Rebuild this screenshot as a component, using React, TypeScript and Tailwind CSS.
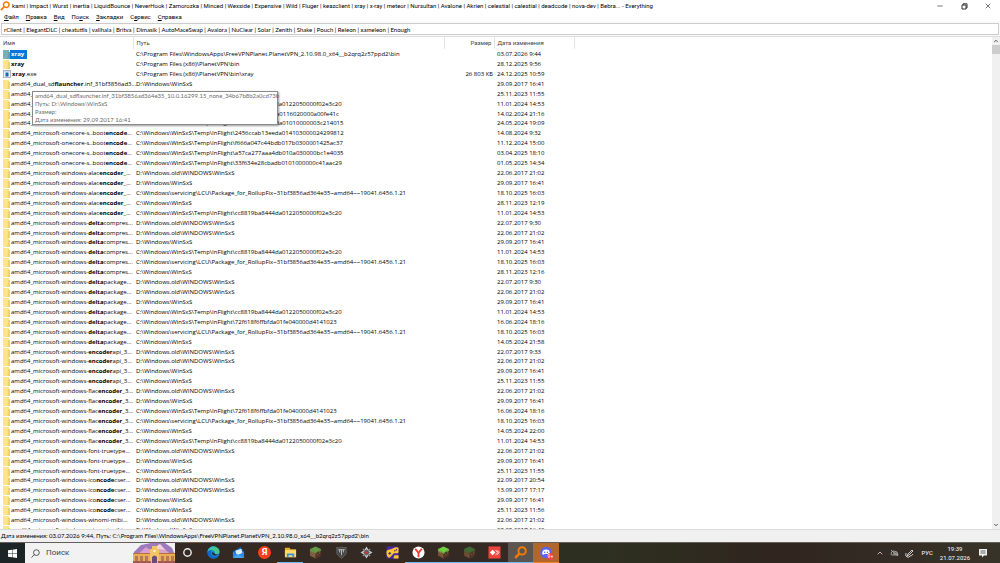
import { useState } from 'react';
import type { ReactNode } from 'react';
import { ChevronDown, ChevronUp, Minus, X } from 'lucide-react';

interface FileRow {
  name: string;
  path: string;
  date: string;
  size?: string;
}

const FLIGHT = 'C:\\Windows\\WinSxS\\Temp\\InFlight\\';
const SERVICING = 'C:\\Windows\\servicing\\LCU\\Package_for_RollupFix~31bf3856ad364e35~amd64~~19041.6456.1.21';
const OLD = 'D:\\Windows.old\\WINDOWS\\WinSxS';
const D_SXS = 'D:\\Windows\\WinSxS';
const C_SXS = 'C:\\Windows\\WinSxS';

const ONECORE = 'amd64_microsoft-onecore-s..boot*encode*...';
const ALAC = 'amd64_microsoft-windows-alac*encoder*_...';
const DELTA_C = 'amd64_microsoft-windows-*delta*compres...';
const DELTA_P = 'amd64_microsoft-windows-*delta*package...';
const ENCODER = 'amd64_microsoft-windows-*encoder*api_3...';
const FLAC = 'amd64_microsoft-windows-flac*encoder*_3...';
const FONT = 'amd64_microsoft-windows-font-truetype...';
const ICON = 'amd64_microsoft-windows-ico*ncode*cser...';
const WINOMI = 'amd64_microsoft-windows-winomi-mibi...';

// parts of a name between asterisks are the matched text
const rows: FileRow[] = [
  { name: '*xray*', path: 'C:\\Program Files\\WindowsApps\\FreeVPNPlanet.PlanetVPN_2.10.98.0_x64__b2qrq2z57ppd2\\bin', date: '03.07.2026 9:44' },
  { name: '*xray*', path: 'C:\\Program Files (x86)\\PlanetVPN\\bin', date: '28.12.2025 9:56' },
  { name: '*xray*.exe', path: 'C:\\Program Files (x86)\\PlanetVPN\\bin\\xray', date: '24.12.2025 10:59', size: '26 803 КБ' },
  { name: 'amd64_dual_sd*flauncher*.inf_31bf3856ad3...', path: D_SXS, date: '29.09.2017 16:41' },
  { name: 'amd64_dual_sd*flauncher*.inf_31bf3856ad3...', path: C_SXS, date: '25.11.2023 11:55' },
  { name: ONECORE, path: FLIGHT + 'cc8819ba8444da0122050000f02e3c20', date: '11.01.2024 14:53' },
  { name: ONECORE, path: FLIGHT + 'b7240f5cc85fda0116020000a00fe41c', date: '14.02.2024 21:16' },
  { name: ONECORE, path: FLIGHT + '5f63abdba7adda01010000003c214015', date: '24.05.2024 19:09' },
  { name: ONECORE, path: FLIGHT + '2456ccab13eeda014103000024299812', date: '14.08.2024 9:32' },
  { name: ONECORE, path: FLIGHT + 'f666a047c44bdb017b0300001425ac37', date: '11.12.2024 15:00' },
  { name: ONECORE, path: FLIGHT + 'a57ca277aaa4db010a030000bc1e4035', date: '03.04.2025 18:10' },
  { name: ONECORE, path: FLIGHT + '33f634e28cbadb0101000000c41aac29', date: '01.05.2025 14:34' },
  { name: ALAC, path: OLD, date: '22.06.2017 21:02' },
  { name: ALAC, path: D_SXS, date: '29.09.2017 16:41' },
  { name: ALAC, path: SERVICING, date: '18.10.2025 16:03' },
  { name: ALAC, path: C_SXS, date: '28.11.2023 12:19' },
  { name: ALAC, path: FLIGHT + 'cc8819ba8444da0122050000f02e3c20', date: '11.01.2024 14:53' },
  { name: DELTA_C, path: OLD, date: '22.07.2017 9:30' },
  { name: DELTA_C, path: OLD, date: '22.06.2017 21:02' },
  { name: DELTA_C, path: D_SXS, date: '29.09.2017 16:41' },
  { name: DELTA_C, path: FLIGHT + 'cc8819ba8444da0122050000f02e3c20', date: '11.01.2024 14:53' },
  { name: DELTA_C, path: SERVICING, date: '18.10.2025 16:03' },
  { name: DELTA_C, path: C_SXS, date: '28.11.2023 12:16' },
  { name: DELTA_P, path: OLD, date: '22.07.2017 9:30' },
  { name: DELTA_P, path: OLD, date: '22.06.2017 21:02' },
  { name: DELTA_P, path: D_SXS, date: '29.09.2017 16:41' },
  { name: DELTA_P, path: FLIGHT + 'cc8819ba8444da0122050000f02e3c20', date: '11.01.2024 14:53' },
  { name: DELTA_P, path: FLIGHT + '72f618f6ffbfda01fe040000d4141023', date: '16.06.2024 18:16' },
  { name: DELTA_P, path: SERVICING, date: '18.10.2025 16:03' },
  { name: DELTA_P, path: C_SXS, date: '14.05.2024 21:58' },
  { name: ENCODER, path: OLD, date: '22.07.2017 9:33' },
  { name: ENCODER, path: OLD, date: '22.06.2017 21:02' },
  { name: ENCODER, path: D_SXS, date: '29.09.2017 16:41' },
  { name: ENCODER, path: C_SXS, date: '25.11.2023 11:55' },
  { name: FLAC, path: OLD, date: '22.06.2017 21:02' },
  { name: FLAC, path: D_SXS, date: '29.09.2017 16:41' },
  { name: FLAC, path: FLIGHT + '72f618f6ffbfda01fe040000d4141023', date: '16.06.2024 18:16' },
  { name: FLAC, path: SERVICING, date: '18.10.2025 16:03' },
  { name: FLAC, path: C_SXS, date: '14.05.2024 22:00' },
  { name: FLAC, path: FLIGHT + 'cc8819ba8444da0122050000f02e3c20', date: '11.01.2024 14:53' },
  { name: FONT, path: OLD, date: '22.06.2017 21:02' },
  { name: FONT, path: D_SXS, date: '29.09.2017 16:41' },
  { name: FONT, path: C_SXS, date: '25.11.2023 11:55' },
  { name: ICON, path: OLD, date: '22.09.2017 20:54' },
  { name: ICON, path: OLD, date: '13.09.2017 17:17' },
  { name: ICON, path: D_SXS, date: '29.09.2017 16:41' },
  { name: ICON, path: C_SXS, date: '25.11.2023 11:56' },
  { name: WINOMI, path: OLD, date: '22.06.2017 21:02' },
  { name: WINOMI, path: D_SXS, date: '29.09.2017 16:42' },
];

const menu = ['Файл', 'Правка', 'Вид', 'Поиск', 'Закладки', 'Сервис', 'Справка'];
// index of the underlined access key in each menu title
const accessKeys = [0, 0, 0, 2, 0, 1, 0];

const FolderIcon = ({ selected }: { selected: boolean }) => (
  <svg viewBox="0 0 7 9" className="w-[7px] h-[9px] shrink-0">
    <path d="M0 0h6v2h1v7H0z" fill={selected ? '#7aafb5' : '#ffe48a'} />
    <path d="M5 2h2v7H4.500z" fill={selected ? '#68a0aa' : '#f5d267'} />
  </svg>
);

const ExeIcon = () => (
  <svg viewBox="0 0 8 8" className="w-2 h-2 shrink-0">
    <rect x=".5" y=".5" width="7" height="7" fill="#eef3f7" stroke="#9aa8b4" strokeWidth=".8" />
    <rect x="1" y="1" width="6" height="1" fill="#c9d6e2" />
    <rect x="2.500" y="2.500" width="3" height="4" fill="#1769b5" />
  </svg>
);

const MagnifierIcon = ({ className }: { className: string }) => (
  <svg viewBox="0 0 16 16" className={className} fill="none" stroke="#f57c00">
    <circle cx="10" cy="6" r="4.500" strokeWidth="2.400" />
    <path d="M6.500 9.500L1.500 14.500" strokeWidth="3" />
  </svg>
);

const FileName = ({ name }: { name: string }) => (
  <>
    {name.split('*').map((part, i) => (i % 2 ? <b key={i}>{part}</b> : <span key={i}>{part}</span>))}
  </>
);

const GrassBlock = ({ top, side }: { top: string; side: string }) => (
  <svg viewBox="0 0 14 14" className="w-[13px] h-[13px]">
    <path d="M7 1l6 2.500v7L7 13.500 1 10.500v-7z" fill={side} />
    <path d="M7 7l6-3v6.500L7 13.500z" fill="#4b3323" />
    <path d="M7 .5l6.200 3L7 7 .8 3.500z" fill={top} />
    <path d="M1 3.500L7 7l6-3.500V5l-2 1.500-1-.5-3 2.500-2-1.500-2 0-2-2z" fill={top} opacity=".75" />
    <path d="M3 8h1v1H3zM5 10h1v1H5zM9 9h1v1H9zM11 7h1v1h-1z" fill="#a47b58" />
  </svg>
);

interface TaskItem {
  label: string;
  icon: ReactNode;
  state: 'idle' | 'open' | 'active' | 'alert';
}

const tasks: TaskItem[] = [
  {
    label: 'Cortana',
    state: 'idle',
    icon: (
      <svg viewBox="0 0 14 14" className="w-[13px] h-[13px]">
        <circle cx="7" cy="7" r="4" fill="none" stroke="#eee" strokeWidth="1.500" />
      </svg>
    ),
  },
  {
    label: 'Edge',
    state: 'idle',
    icon: (
      <svg viewBox="0 0 14 14" className="w-[13px] h-[13px]">
        <circle cx="7" cy="7" r="6.500" fill="#1683d8" />
        <path d="M.6 6.500C1 2.500 4 .5 7 .5c4 0 6.500 3 6.500 5.500 0 2-1.500 3-3.200 3C8.500 9 8 8.400 8.300 7.600 8.800 6 7.500 4.500 5.500 4.500 3 4.500 1.200 5.500.6 6.500z" fill="#43c88c" />
        <path d="M.6 6.500C1 2.500 4 .5 7 .5c1 0 2 .2 3 .6C6 1.500 2 3 .6 6.500z" fill="#35b5e5" />
        <path d="M.5 7C1 5 3 4 5 4.200 3.500 5.500 3.500 9.500 6.500 11c2 1 4.500.6 6-.6C11.500 12.500 9.500 13.500 7 13.500 3 13.500.5 10.500.5 7z" fill="#1268c0" />
        <path d="M5.500 6.500C5 8.500 6.500 10.500 9 10.300c1.200 0 2.500-.6 3.500-1.300-1.500.5-4 .3-4.300-.9z" fill="#2b2420" />
      </svg>
    ),
  },
  {
    label: 'Почта',
    state: 'idle',
    icon: (
      <svg viewBox="0 0 14 14" className="w-[13px] h-[13px]">
        <path d="M1 6l8-5 4 5v7H1z" fill="#1463ba" />
        <path d="M3.500 5l6.500-2 1.500 5L5 10z" fill="#dceefa" />
        <path d="M1 6l6 4 6-4v7H1z" fill="#2b8be5" />
        <path d="M1 13l5-4 7 4z" fill="#4ba6f0" />
      </svg>
    ),
  },
  {
    label: 'Яндекс',
    state: 'idle',
    icon: (
      <span className="flex size-[13px] items-center justify-center rounded-full bg-[#fc3f1d] text-[9px] leading-none font-bold text-white">
        Я
      </span>
    ),
  },
  {
    label: 'Проводник',
    state: 'open',
    icon: (
      <svg viewBox="0 0 14 14" className="w-[13px] h-[13px]">
        <path d="M1 2h5l1 1.500h6V12H1z" fill="#e9ad2b" />
        <path d="M1 4.500h12V12H1z" fill="#ffda6b" />
        <path d="M3 8h8v4H9v-2H5v2H3z" fill="#3c91d9" />
      </svg>
    ),
  },
  { label: 'Minecraft', state: 'idle', icon: <GrassBlock top="#619b43" side="#80583b" /> },
  {
    label: 'World of Tanks',
    state: 'idle',
    icon: (
      <svg viewBox="0 0 14 14" className="w-[13px] h-[13px]">
        <path d="M2 1.500L4.500 2 7 1l2.500 1L12 1.500v7L7 13.500 2 8.500z" fill="#454746" stroke="#777978" strokeWidth=".7" />
        <path d="M3.500 4h7M7 4v6M5 4v3M9 4v3" stroke="#c0c1bf" strokeWidth="1" />
      </svg>
    ),
  },
  {
    label: 'Лаунчер',
    state: 'idle',
    icon: (
      <svg viewBox="0 0 14 14" className="w-[13px] h-[13px]">
        <path d="M7 .5l2.500 4 4 2.500-4 2.500-2.500 4-2.500-4-4-2.500 4-2.500z" fill="#c3c8ca" />
        <path d="M3 3l3 3M11 3L8 6M3 11l3-3M11 11L8 8" stroke="#8c9194" strokeWidth="1.200" />
        <path d="M7 3.500L10.500 7 7 10.500 3.500 7z" fill="#55595c" />
        <path d="M7 5l2 2-2 2-2-2z" fill="#d83535" />
      </svg>
    ),
  },
  {
    label: 'Игры',
    state: 'idle',
    icon: (
      <svg viewBox="0 0 14 14" className="w-[13px] h-[13px]">
        <rect x=".5" y=".5" width="13" height="13" rx="1" fill="#4a28a8" />
        <path d="M.5 6c1-2.500 3-2 5-2.500S10 0 13.500 2v5c-1 1.500-2.500.5-4 .5S6 10.500 4 12.500C1 13 .5 9 .5 6z" fill="#ffc52f" />
        <path d="M2.500 8h3M4 6.500v3" stroke="#3b2686" strokeWidth="1" />
        <circle cx="9.500" cy="5" r=".8" fill="#3b2686" />
        <circle cx="11.300" cy="4" r=".8" fill="#3b2686" />
        <path d="M9 10h4.500v3.500H8z" fill="#ffc52f" />
      </svg>
    ),
  },
  {
    label: 'Яндекс Браузер',
    state: 'open',
    icon: (
      <svg viewBox="0 0 14 14" className="w-[13px] h-[13px]">
        <circle cx="7" cy="7" r="6.500" fill="#fff" />
        <path d="M3.500 3L7 7.500V12M10.500 3L7 7.500" fill="none" stroke="#f23a31" strokeWidth="2" />
      </svg>
    ),
  },
  { label: 'Minecraft Launcher', state: 'open', icon: <GrassBlock top="#6fd044" side="#754e34" /> },
  { label: 'Minecraft Server', state: 'open', icon: <GrassBlock top="#3f6a32" side="#684631" /> },
  {
    label: 'AnyDesk',
    state: 'open',
    icon: (
      <svg viewBox="0 0 14 14" className="w-[13px] h-[13px]">
        <rect x=".5" y=".5" width="13" height="13" fill="#ef443b" />
        <path d="M5 4l3 3-3 3-3-3z" fill="#fff" />
        <path d="M8 4.500L10.500 7 8 9.500M9.500 4.500L12 7 9.500 9.500" fill="none" stroke="#fff" strokeWidth=".9" />
      </svg>
    ),
  },
  { label: 'Everything', state: 'active', icon: <MagnifierIcon className="w-[13px] h-[13px]" /> },
  {
    label: 'Discord',
    state: 'alert',
    icon: (
      <svg viewBox="0 0 14 14" className="w-[13px] h-[13px]">
        <circle cx="6.500" cy="7" r="6.300" fill="#5865f2" />
        <path d="M3.500 4.500C5 3.700 8 3.700 9.500 4.500c1 1.500 1.300 3 1 4.500L9 9.500 8.300 8.700H4.700L4 9.500 2.500 9c-.3-1.500 0-3 1-4.500z" fill="#fff" />
        <circle cx="5" cy="6.800" r=".8" fill="#5865f2" />
        <circle cx="8" cy="6.800" r=".8" fill="#5865f2" />
      </svg>
    ),
  },
];

const taskStyles = {
  idle: 'border-transparent',
  open: 'border-[#76b9ed]',
  active: 'border-[#76b9ed] bg-[#5b5450]',
  alert: 'border-[#f7801f] bg-[#b3662a]',
};

const TitleBar = () => (
  <header className="flex h-3 shrink-0 items-center justify-between bg-white">
    <div className="flex min-w-0 items-center gap-[2px]">
      <MagnifierIcon className="w-[10px] h-[10px]" />
      <h1 className="whitespace-nowrap">
        kami | Impact | Wurst | inertia | LiquidBounce | NeverHook | Zamorozka | Minced | Wexside | Expensive | Wild |
        Fluger | keazclient | xray | x-ray | meteor | Nursultan | Avalone | Akrien | celestial | calestial | deadcode |
        nova-dev | Bebra... - Everything
      </h1>
    </div>
    <div className="flex items-center text-[#333]">
      <button aria-label="Свернуть" className="flex h-3 w-6 items-center justify-center">
        <Minus className="size-2" />
      </button>
      <button aria-label="Развернуть" className="flex h-3 w-6 items-center justify-center">
        <svg viewBox="0 0 7 7" className="size-[7px]" fill="none" stroke="currentColor">
          <path d="M1 2h4v4H1zM2 2V.8h4V5H5" />
        </svg>
      </button>
      <button aria-label="Закрыть" className="flex h-3 w-6 items-center justify-center">
        <X className="size-2" />
      </button>
    </div>
  </header>
);

const Tooltip = () => (
  <div
    role="tooltip"
    className="absolute top-[54px] left-8 z-10 w-[246px] border border-[#8a8a8a] bg-white px-[2px] font-['Lato',sans-serif] leading-[8px] whitespace-nowrap text-[#6b6b6b] shadow-[1px_1px_2px_#0006]"
  >
    <p>amd64_dual_sdflauncher.inf_31bf3856ad364e35_10.0.16299.15_none_34b67b8b2a0cd73b</p>
    <p>Путь: D:\Windows\WinSxS</p>
    <p>Размер:</p>
    <p>Дата изменения: 29.09.2017 16:41</p>
  </div>
);

const FileTable = ({ selected, onSelect }: { selected: number; onSelect: (i: number) => void }) => (
  <table className="w-full table-fixed border-collapse text-left whitespace-nowrap">
    <colgroup>
      <col className="w-[133px]" />
      <col className="w-[311px]" />
      <col className="w-[50px]" />
      <col className="w-[80px]" />
      <col />
    </colgroup>
    <thead>
      <tr className="leading-[12px] text-[#444]">
        <th className="border-r border-[#e5e5e5] p-0 pl-[3px] font-normal">Имя</th>
        <th className="border-r border-[#e5e5e5] p-0 pl-[3px] font-normal">Путь</th>
        <th className="border-r border-[#e5e5e5] p-0 pr-[2px] text-right font-normal">Размер</th>
        <th className="border-r border-[#e5e5e5] p-0 pl-[3px] font-normal">Дата изменения</th>
        <th className="p-0" aria-hidden="true" />
      </tr>
    </thead>
    <tbody className="font-['Open_Sans',sans-serif]">
      {rows.map((row, i) => (
        <tr key={i} onClick={() => onSelect(i)} className="h-[10px] leading-[9px] nth-[12n+8]:h-[9px]">
          <td className="p-0 pl-[3px]">
            <div className="flex items-center">
              {row.size ? <ExeIcon /> : <FolderIcon selected={i === selected} />}
              <span className={i === selected ? 'bg-[#0078d7] pr-[3px] pl-px text-white' : 'pl-px'}>
                <FileName name={row.name} />
              </span>
            </div>
          </td>
          <td className="overflow-hidden p-0 pl-[3px]">{row.path}</td>
          <td className="p-0 pr-px text-right">{row.size}</td>
          <td className="p-0 pl-[3px]">{row.date}</td>
          <td className="p-0" />
        </tr>
      ))}
    </tbody>
  </table>
);

const ScrollBar = () => (
  <div className="flex w-2 shrink-0 flex-col bg-[#f0f0f0] text-[#555]">
    <button aria-label="Вверх" className="flex h-2 items-center justify-center">
      <ChevronUp className="size-[6px]" strokeWidth={4} />
    </button>
    <div className="h-[9px] bg-[#cdcdcd]" />
    <div className="flex-1" />
    <button aria-label="Вниз" className="flex h-2 items-center justify-center">
      <ChevronDown className="size-[6px]" strokeWidth={4} />
    </button>
  </div>
);

const SearchArt = () => (
  <svg viewBox="0 0 42 20" className="h-5 w-[42px] shrink-0">
    <path d="M1 20V9L8 2 18 0h14l7 5 3 7v8z" fill="#9d79bd" />
    <path d="M4 12L13 4l6 4 8-7 12 12z" fill="#d9a1c7" />
    <path d="M17 7L27 1l5 6-6-1-4 3z" fill="#f1d0e2" />
    <path d="M0 10h42v10H0z" fill="#e9ae57" />
    <path d="M17 6h9v14h-9zM19 3h5v3h-5z" fill="#f1c469" />
    <path d="M0 10h17v1H0zM26 10h16v1H26z" fill="#b9703f" />
    <path d="M2 13h3v5H2zM7 13h3v5H7zM12 13h3v5h-3zM28 13h3v5h-3zM33 13h3v5h-3zM38 13h3v5h-3z" fill="#b57a58" />
    <path d="M19 20v-6q2.500-3 5 0v6z" fill="#6d4b76" />
    <circle cx="21.500" cy="8" r="1.200" fill="#fff3c9" />
    <path d="M0 18h18v2H0zM25 18h17v2H25z" fill="#a35a52" />
  </svg>
);

const TaskBar = () => (
  <footer className="flex h-[21px] shrink-0 items-stretch justify-between border-t border-[#665f59] bg-linear-to-r from-[#2d3020] from-60% via-[#30251f] via-78% to-[#383329] text-white">
    <div className="flex min-w-0">
      <button aria-label="Пуск" className="flex w-[25px] items-center justify-center bg-[#1d2426]">
        <svg viewBox="0 0 10 10" className="size-[9px]" fill="#fff">
          <path d="M0 1.400L4.500.8v3.900H0zM5 .7L10 0v4.700H5zM0 5.200h4.500v3.900L0 8.500zM5 5.200h5V10l-5-.7z" />
        </svg>
      </button>
      <label className="flex w-[150px] items-center bg-[#f2f2f2] pl-[6px]">
        <svg viewBox="0 0 10 10" className="size-[9px] shrink-0" fill="none" stroke="#333" strokeWidth=".9">
          <circle cx="6" cy="4" r="3.200" />
          <path d="M3.700 6.300L.5 9.500" />
        </svg>
        <input
          aria-label="Поиск"
          placeholder="Поиск"
          className="ml-[6px] min-w-0 flex-1 bg-transparent text-[8px] leading-[12px] outline-none placeholder:text-[#444]"
        />
        <SearchArt />
      </label>
      <nav className="flex w-[384px] bg-[#342923]">
        {tasks.map((task) => (
          <button
            key={task.label}
            aria-label={task.label}
            className={`relative flex flex-1 items-center justify-center border-b ${taskStyles[task.state]}`}
          >
            {task.icon}
            {task.state === 'alert' && (
              <span className="absolute right-[5px] bottom-[2px] flex size-[7px] items-center justify-center rounded-full bg-[#ed4245] text-[5px] leading-none">
                9+
              </span>
            )}
          </button>
        ))}
      </nav>
    </div>
    <div className="flex shrink-0 items-center gap-[6px] pr-3">
      <ChevronUp className="size-2" />
      <svg viewBox="0 0 9 8" className="h-2 w-[9px]" fill="none" stroke="#aaa" strokeWidth=".9">
        <path d="M1 1l7 6M1 5q0-3 3-3 4 0 4 4H2q-1 0-1-1zM3 4h4M3 5h5" />
      </svg>
      <svg viewBox="0 0 9 9" className="size-[9px]" fill="none" stroke="#ddd" strokeWidth=".9">
        <path d="M3 5l4-4 1 1-4 4-2 1zM1 4q-1 3 1 4t3-1M5 7q2 0 3-2" />
      </svg>
      <span className="px-px text-[6px]">РУС</span>
      <time className="text-center text-[6px] leading-[9px]">
        19:39
        <br />
        21.07.2026
      </time>
      <svg viewBox="0 0 10 10" className="ml-[2px] size-[10px]">
        <path d="M1 1h8v6.500H6L4 9.500v-2H1z" fill="#eee" />
        <path d="M2.500 3h5M2.500 5h5" stroke="#444" strokeWidth=".8" />
      </svg>
    </div>
  </footer>
);

const App = () => {
  const [query, setQuery] = useState(
    'rClient | ElegantDLC | cheatutils | vallhala | Britva | Dimasik | AutoMaceSwap | Avalora | NuClear | Solar | Zenith | Shake | Pouch | Releon | xameleon | Enough'
  );
  const [selected, setSelected] = useState(0);

  return (
    <div className="flex h-screen flex-col overflow-hidden bg-white font-['Roboto','Noto_Sans',sans-serif] text-[6px] leading-[10px] text-black">
      <TitleBar />
      <nav className="flex h-[9px] shrink-0 items-center gap-[7px] px-1">
        {menu.map((item, i) => (
          <button key={item}>
            {item.slice(0, accessKeys[i])}
            <u>{item[accessKeys[i]]}</u>
            {item.slice(accessKeys[i] + 1)}
          </button>
        ))}
      </nav>
      <div className="shrink-0 border-b border-[#dcdcdc] bg-[#fafafa] px-px pt-[2px] pb-px">
        <input
          aria-label="Строка поиска"
          value={query}
          onChange={(e) => setQuery(e.target.value)}
          className="block h-3 w-full border border-[#cccccc] bg-white px-[2px] font-['Lato',sans-serif] outline-none"
        />
      </div>
      <main className="relative flex min-h-0 flex-1">
        <div className="min-w-0 flex-1 overflow-hidden">
          <FileTable selected={selected} onSelect={setSelected} />
        </div>
        <ScrollBar />
        <Tooltip />
      </main>
      <div className="shrink-0 border-t border-[#dcdcdc] bg-[#f0f0f0] px-px font-['Lato',sans-serif] leading-[12px] whitespace-nowrap">
        Дата изменения: 03.07.2026 9:44, Путь: C:\Program Files\WindowsApps\FreeVPNPlanet.PlanetVPN_2.10.98.0_x64__b2qrq2z57ppd2\bin
      </div>
      <TaskBar />
    </div>
  );
};

export default App;
